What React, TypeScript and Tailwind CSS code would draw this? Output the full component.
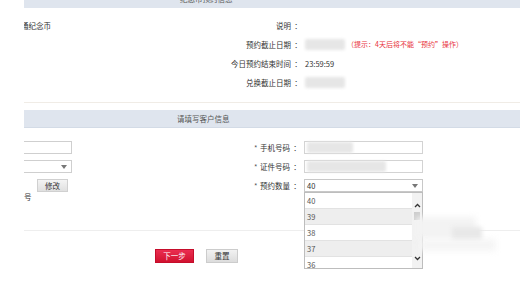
import React from "react";

const font = { fontFamily: '"Noto Sans CJK SC", "Noto Sans", sans-serif' };

function InfoRow({ left, label, children }: { left?: string; label: string; children?: React.ReactNode }) {
  return (
    <div className="flex items-center h-[19px]">
      <div className="w-[267px] flex justify-between items-center">
        <span className="-ml-[3px]">{left ?? ""}</span>
        <span>{label}</span>
      </div>
      <div className="w-[14px] text-center">：</div>
      <div className="flex items-center">{children}</div>
    </div>
  );
}

function Blur({ w }: { w: number }) {
  return <div className="h-[11px] bg-[#e6e6e6] blur-[1.5px] rounded-[2px]" style={{ width: w }} />;
}

function FormRow({ label, children }: { label: string; children: React.ReactNode }) {
  return (
    <div className="flex items-center h-[13px]">
      <span className="w-[6px] text-[#555]">*</span>
      <span className="w-[30px]">{label}</span>
      <span className="w-[14px] text-center">：</span>
      {children}
    </div>
  );
}

export default function App() {
  const items = ["40", "39", "38", "37", "36"];
  return (
    <div className="w-[520px] h-[300px] overflow-hidden bg-white relative text-[7.5px] text-[#333] leading-none" style={font}>
      <div className="ml-[24px] -mt-[10px] w-[496px] h-[310px] overflow-hidden relative">
        {/* section 1 header */}
        <div className="h-[18px] bg-[#dfe5ee] flex items-center pl-[156px] text-[#555]">纪念币预约信息</div>
        {/* section 1 body */}
        <div className="h-[95px] border-b border-[#f0ece6] pt-[8px]">
          <InfoRow left="通纪念币" label="说明" />
          <InfoRow label="预约截止日期">
            <Blur w={40} />
            <span className="ml-[2px] text-[#e8323c] text-[7px]">（提示：4天后将不能“预约”操作）</span>
          </InfoRow>
          <InfoRow label="今日预约结束时间">
            <span>23:59:59</span>
          </InfoRow>
          <InfoRow label="兑换截止日期">
            <Blur w={40} />
          </InfoRow>
        </div>
        {/* section 2 header */}
        <div className="mt-[7px] h-[18px] bg-[#dfe5ee] border-b border-[#d3dbe6] flex items-center pl-[153px] text-[#555]">请填写客户信息</div>
        {/* form */}
        <div className="flex pt-[13px] h-[102px]">
          <div className="w-[230px] flex flex-col gap-[6px]">
            <div className="-ml-[100px] w-[148px] h-[13px] border border-[#cfcfcf] bg-white" />
            <div className="-ml-[100px] w-[148px] h-[13px] border border-[#cfcfcf] bg-white flex items-center justify-end pr-[4px]">
              <svg width="6" height="4" viewBox="0 0 6 4"><path d="M0 0h6L3 4z" fill="#777" /></svg>
            </div>
            <div className="ml-[13px] w-[31px] h-[13px] border border-[#d0d0d0] bg-gradient-to-b from-[#f4f4f4] to-[#e0e0e0] flex items-center justify-center text-[#333]">修改</div>
            <div className="-mt-[5px]">号</div>
          </div>
          <div className="flex flex-col gap-[6px]">
            <FormRow label="手机号码">
              <div className="w-[119px] h-[13px] border border-[#d3d3d3] flex items-center pl-[2px]">
                <Blur w={46} />
              </div>
            </FormRow>
            <FormRow label="证件号码">
              <div className="w-[119px] h-[13px] border border-[#d3d3d3] flex items-center pl-[2px]">
                <Blur w={79} />
              </div>
            </FormRow>
            <FormRow label="预约数量">
              <div className="relative w-[119px] h-[13px] border border-[#c8c8c8] flex items-center justify-between pl-[2px] pr-[4px]">
                <span>40</span>
                <svg width="6" height="4" viewBox="0 0 6 4"><path d="M0 0h6L3 4z" fill="#777" /></svg>
                <div className="absolute left-[-1px] top-[12px] w-[119px] h-[77px] border border-[#bdbdbd] bg-white overflow-hidden z-10">
                  {items.map((it, i) => (
                    <div key={it} className={`h-[16px] flex items-center pl-[2px] text-[#555] border-b border-[#e2e2e2] ${i % 2 === 1 ? "bg-[#eeeeee]" : "bg-white"}`}>{it}</div>
                  ))}
                  <div className="absolute right-0 top-0 w-[10px] h-full bg-[#f2f2f2] flex flex-col items-center">
                    <svg className="mt-[10px]" width="7" height="5" viewBox="0 0 7 5"><path d="M1 4L3.5 1.5L6 4" stroke="#333" strokeWidth="1.3" fill="none" /></svg>
                    <div className="mt-[4px] w-[6px] h-[8px] bg-[#cdcdcd]" />
                    <svg className="mt-[36px]" width="7" height="5" viewBox="0 0 7 5"><path d="M1 1L3.5 3.5L6 1" stroke="#333" strokeWidth="1.3" fill="none" /></svg>
                  </div>
                </div>
              </div>
            </FormRow>
          </div>
        </div>
        {/* separator and buttons */}
        <div className="border-t border-[#eeeeee] pt-[18px] flex pl-[131px] gap-[12px]">
          <div className="w-[39px] h-[14px] bg-gradient-to-b from-[#ea2d50] to-[#d1102f] border border-[#c50d2b] text-white flex items-center justify-center">下一步</div>
          <div className="w-[32px] h-[14px] bg-gradient-to-b from-[#f2f2f2] to-[#dcdcdc] border border-[#cccccc] flex items-center justify-center text-[#333]">重置</div>
        </div>
        {/* watermark blur */}
        <div className="absolute left-[388px] top-[225px] w-[88px] h-[40px] pointer-events-none z-20">
          <div className="absolute left-[4px] top-[2px] w-[60px] h-[22px] bg-[#f3f3f3] blur-[3px]" />
          <div className="absolute left-[40px] top-[12px] w-[30px] h-[14px] bg-[#e8e8e8] blur-[2px]" />
          <div className="absolute left-[8px] top-[24px] w-[76px] h-[12px] bg-[#f5f5f5] blur-[3px]" />
        </div>
      </div>
    </div>
  );
}
